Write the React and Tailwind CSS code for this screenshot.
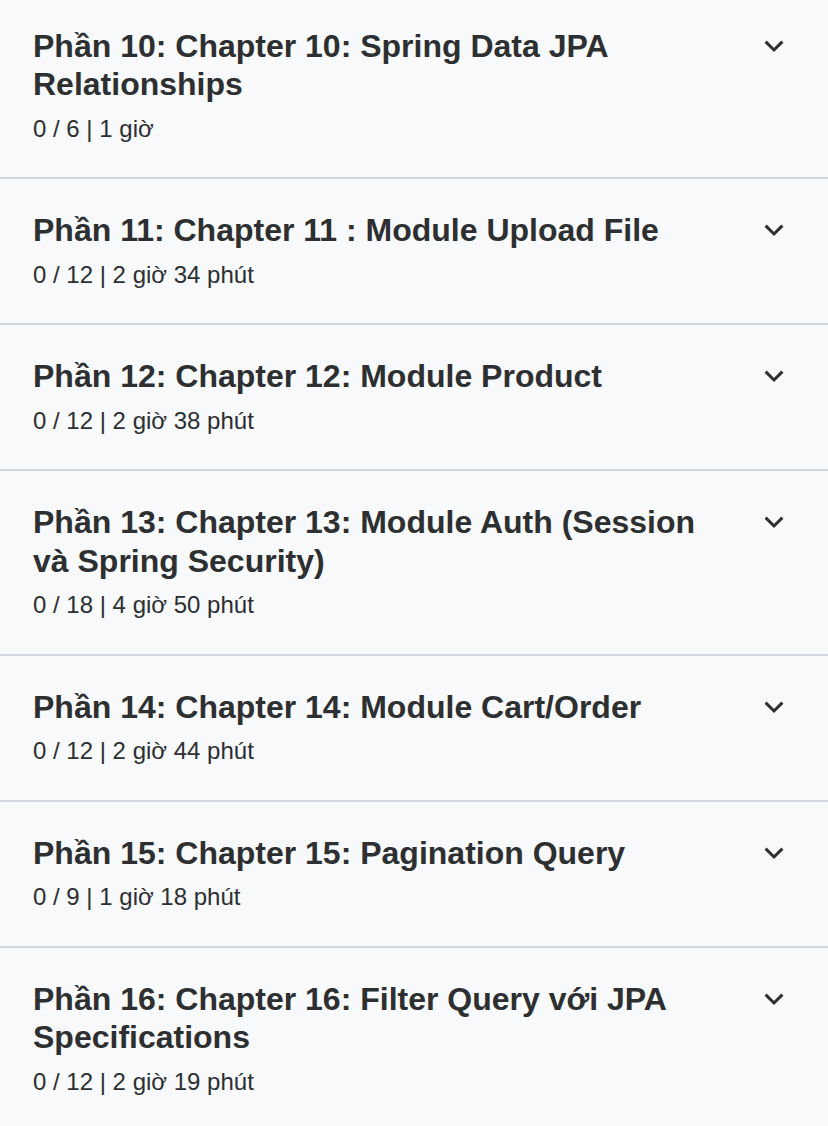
import React from "react";

const sections = [
  { title: "Phần 10: Chapter 10: Spring Data JPA Relationships", meta: "0 / 6 | 1 giờ" },
  { title: "Phần 11: Chapter 11 : Module Upload File", meta: "0 / 12 | 2 giờ 34 phút" },
  { title: "Phần 12: Chapter 12: Module Product", meta: "0 / 12 | 2 giờ 38 phút" },
  { title: "Phần 13: Chapter 13: Module Auth (Session và Spring Security)", meta: "0 / 18 | 4 giờ 50 phút" },
  { title: "Phần 14: Chapter 14: Module Cart/Order", meta: "0 / 12 | 2 giờ 44 phút" },
  { title: "Phần 15: Chapter 15: Pagination Query", meta: "0 / 9 | 1 giờ 18 phút" },
  { title: "Phần 16: Chapter 16: Filter Query với JPA Specifications", meta: "0 / 12 | 2 giờ 19 phút" },
];

function Chevron() {
  return (
    <svg width="20" height="13" viewBox="0 0 20 13" fill="none" aria-hidden="true">
      <path d="M1.6 1.6 L10 10 L18.4 1.6" stroke="#2d2f31" strokeWidth="3" strokeLinecap="butt" strokeLinejoin="miter" />
    </svg>
  );
}

export default function App() {
  return (
    <div
      className="min-h-[1126px] w-full overflow-hidden bg-[#f7f9fa] text-[#2d2f31]"
      style={{ fontFamily: '"Liberation Sans", Arial, Helvetica, sans-serif' }}
    >
      <div className="-mt-[5px]">
        {sections.map((s, i) => (
          <div key={i} className="flex items-start border-b-2 border-[#d1d7dc] pl-[33px] pr-[44px] pt-[32px] pb-[32px]">
            <div className="min-w-0 flex-1 pr-[32px]">
              <h3 className="text-[32px] font-bold leading-[38.4px]">{s.title}</h3>
              <div className="mt-2 text-[24px] leading-[33.6px]">{s.meta}</div>
            </div>
            <div className="flex h-[38.4px] w-[20px] shrink-0 items-center justify-center">
              <Chevron />
            </div>
          </div>
        ))}
      </div>
    </div>
  );
}
